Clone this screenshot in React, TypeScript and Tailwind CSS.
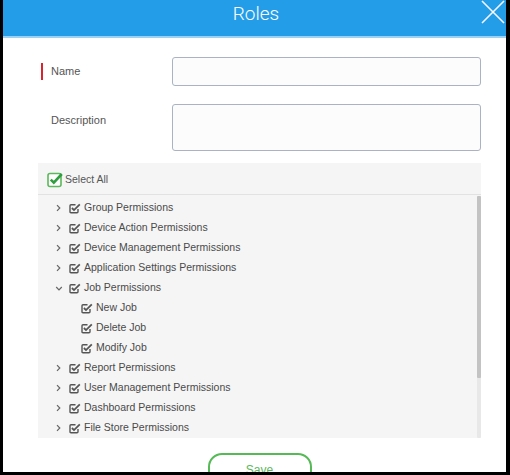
import React from "react";

const Check = () => (
  <svg width="12" height="12" viewBox="0 0 12 12" className="shrink-0">
    <path d="M9 7 V9.8 Q9 10.8 8 10.8 H2 Q1 10.8 1 9.8 V3.8 Q1 2.8 2 2.8 H6.5" fill="none" stroke="#555" strokeWidth="1.4" />
    <path d="M2.9 6 L5 8.1 L10.8 2.3" fill="none" stroke="#555" strokeWidth="1.8" />
  </svg>
);

const ChevRight = () => (
  <svg width="5" height="8" viewBox="0 0 5 8" className="shrink-0">
    <path d="M1 1.2 L3.8 4 L1 6.8" fill="none" stroke="#666" strokeWidth="1.2" />
  </svg>
);

const ChevDown = () => (
  <svg width="8" height="5" viewBox="0 0 8 5" className="shrink-0 -ml-[1px]">
    <path d="M1.2 1 L4 3.8 L6.8 1" fill="none" stroke="#666" strokeWidth="1.2" />
  </svg>
);

type Row = { label: string; open?: boolean; child?: boolean };

const rows: Row[] = [
  { label: "Group Permissions" },
  { label: "Device Action Permissions" },
  { label: "Device Management Permissions" },
  { label: "Application Settings Permissions" },
  { label: "Job Permissions", open: true },
  { label: "New Job", child: true },
  { label: "Delete Job", child: true },
  { label: "Modify Job", child: true },
  { label: "Report Permissions" },
  { label: "User Management Permissions" },
  { label: "Dashboard Permissions" },
  { label: "File Store Permissions" },
];

export default function App() {
  return (
    <div
      className="w-[510px] h-[475px] bg-white border-l-[3px] border-r-[4px] border-b-[3px] border-black overflow-hidden flex flex-col"
      style={{ fontFamily: '"Liberation Sans", Arial, sans-serif' }}
    >
      <div className="h-[38px] shrink-0 bg-[#249de8] border-b-2 border-[#9dd1f3] relative flex justify-center">
        <div
          className="text-white text-[19px] font-light leading-none pt-[4px] pl-[3px]"
          style={{ fontFamily: "Roboto, sans-serif" }}
        >
          Roles
        </div>
        <svg width="26" height="26" viewBox="0 0 26 26" className="absolute right-[0px] top-[0px]">
          <path d="M2 1 L24 23 M24 1 L2 23" stroke="white" strokeWidth="1.5" fill="none" />
        </svg>
      </div>

      <div className="flex mt-[19px] ml-[35px] items-center">
        <div className="w-[134px] flex items-center">
          <div className="w-[2px] h-[17px] bg-[#d9232e] ml-[3px]" />
          <span className="ml-[8px] text-[11px] text-[#555]">Name</span>
        </div>
        <div className="w-[309px] h-[29px] rounded-[3px] border border-[#aab2c3] bg-[#fcfcfc]" />
      </div>

      <div className="flex mt-[18px] ml-[35px]">
        <div className="w-[134px] pl-[13px] pt-[8px] text-[11px] text-[#555]">Description</div>
        <div className="w-[309px] h-[47px] rounded-[3px] border border-[#aab2c3] bg-[#fcfcfc]" />
      </div>

      <div className="mt-[12px] ml-[35px] w-[443px] h-[275px] shrink-0 bg-[#f5f5f5] flex flex-col">
        <div className="h-[32px] shrink-0 border-b-[1.5px] border-[#e2e2e2] flex items-center pl-[9px] pt-[2px]">
          <svg width="17" height="17" viewBox="0 0 17 17" className="shrink-0 -mt-[1px]">
            <rect x="1" y="2.5" width="13" height="13" rx="2" fill="#fff" stroke="#5cb85c" strokeWidth="1.6" />
            <path d="M3.8 8.6 L6.8 11.6 L14.8 3" fill="none" stroke="#2e9e3e" strokeWidth="2.6" />
          </svg>
          <span className="ml-[1px] text-[10.5px] text-[#555]">Select All</span>
        </div>
        <div className="flex flex-1 min-h-0">
          <div className="flex-1 pt-[3px]">
            {rows.map((r) =>
              r.child ? (
                <div key={r.label} className="h-[20px] flex items-center pl-[43px]">
                  <Check />
                  <span className="ml-[3px] text-[10.5px] text-[#4a4a4a] whitespace-nowrap">{r.label}</span>
                </div>
              ) : (
                <div key={r.label} className="h-[20px] flex items-center pl-[18px]">
                  <div className="w-[13px] flex items-center">{r.open ? <ChevDown /> : <ChevRight />}</div>
                  <Check />
                  <span className="ml-[3px] text-[10.5px] text-[#4a4a4a] whitespace-nowrap">{r.label}</span>
                </div>
              )
            )}
          </div>
          <div className="w-[4px] mt-[1px] bg-[#e8e8e8] rounded-[1px] flex flex-col">
            <div className="h-[182px] bg-[#c3c3c3] rounded-[1px]" />
          </div>
        </div>
      </div>

      <div className="ml-[35px] w-[443px] flex justify-center mt-[15px]">
        <div className="w-[104px] h-[34px] shrink-0 rounded-[14px] border-2 border-[#55b955] flex justify-center pt-[6px]">
          <span className="text-[12px] text-[#5cb85c]">Save</span>
        </div>
      </div>
    </div>
  );
}
